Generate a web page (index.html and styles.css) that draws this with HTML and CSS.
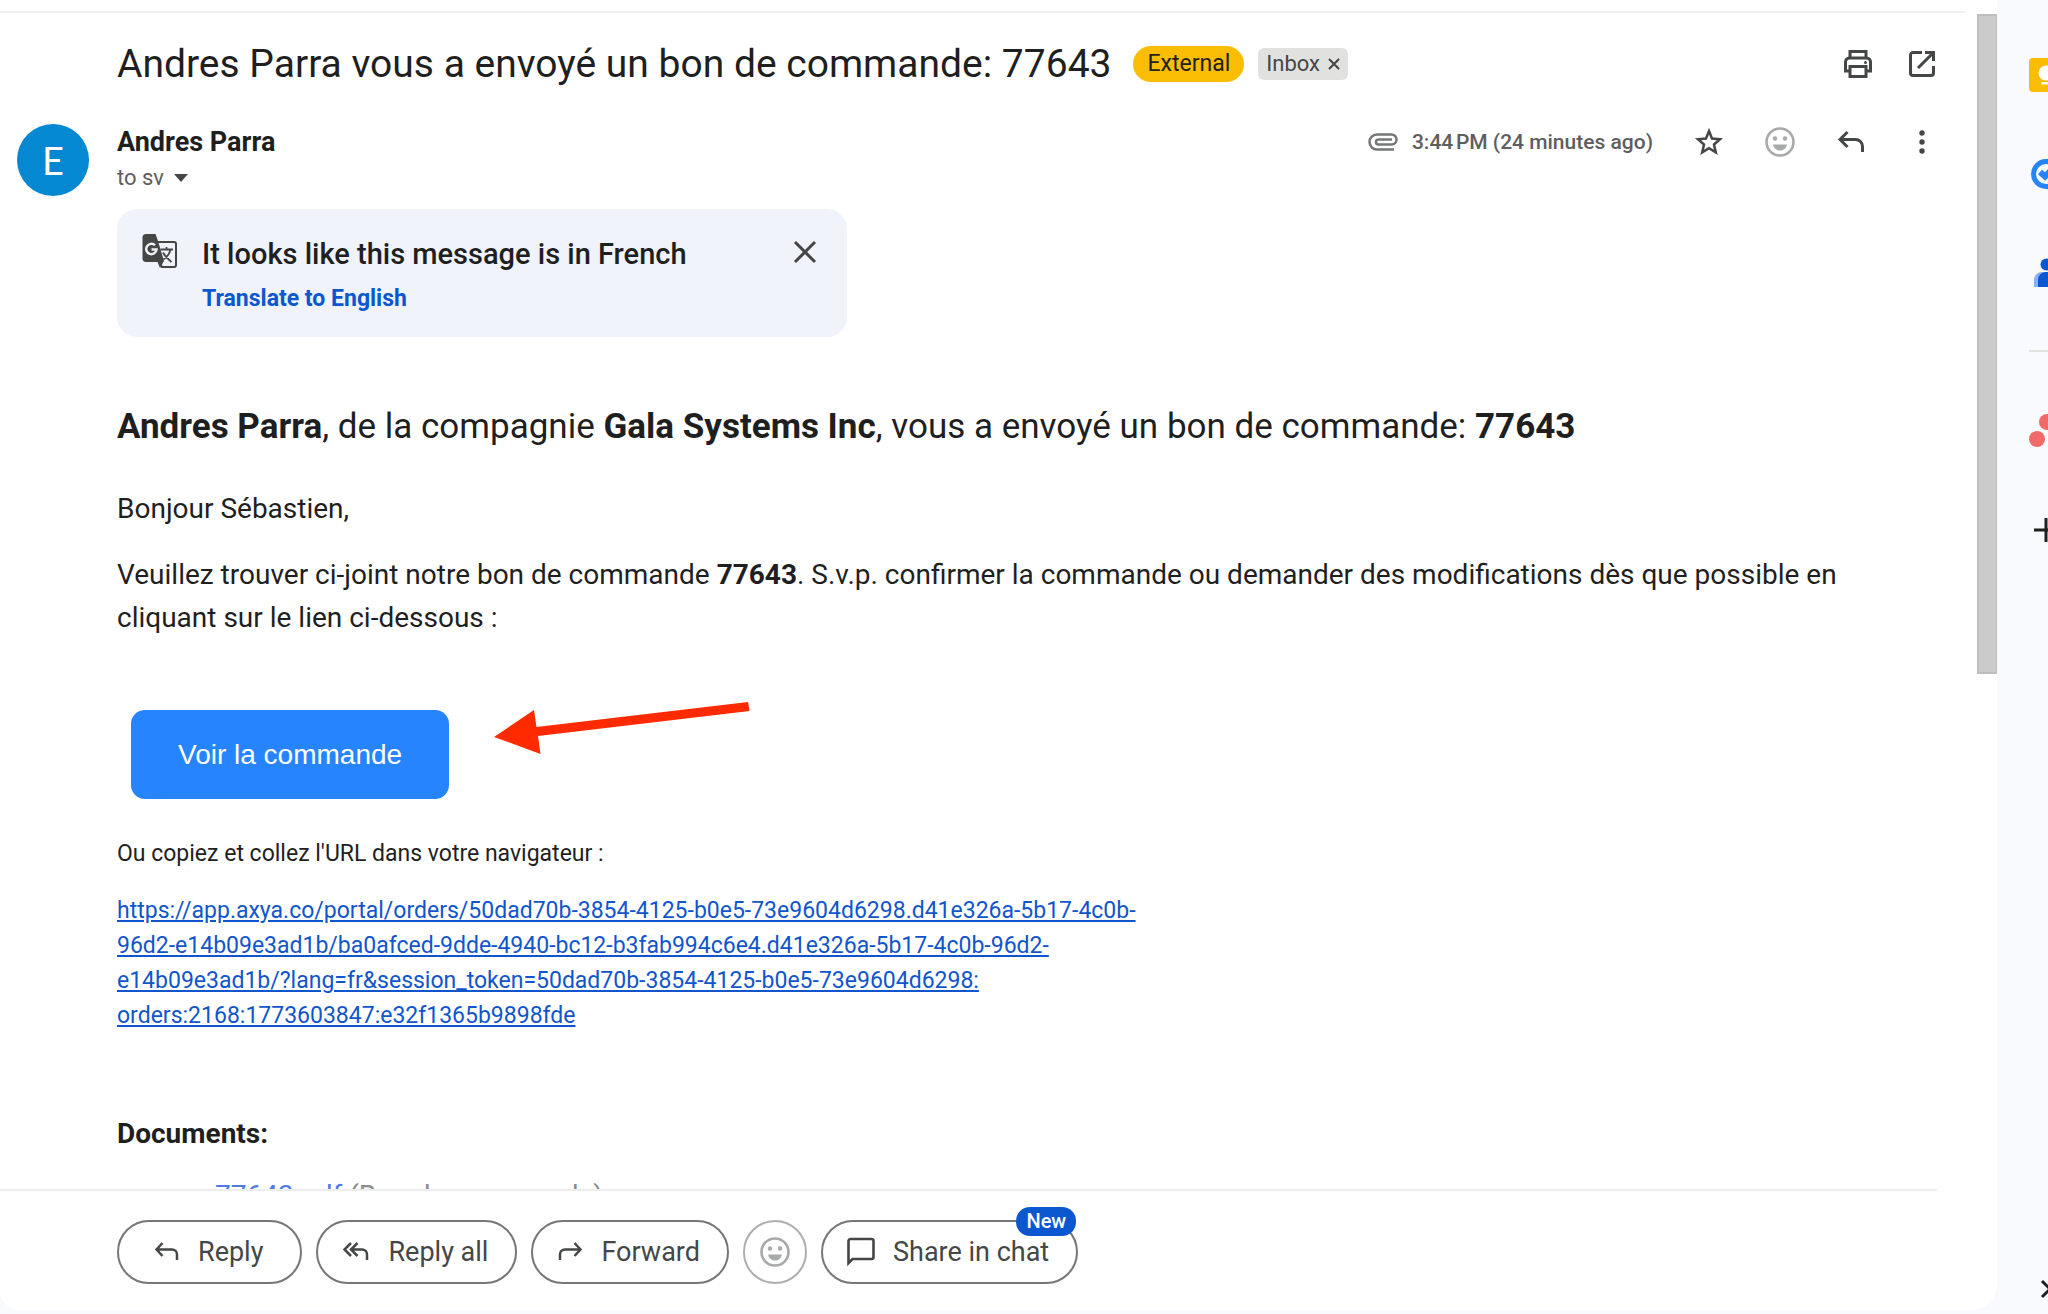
FILE: index.html
```
<!DOCTYPE html>
<html lang="fr">
<head>
<meta charset="utf-8">
<title>Andres Parra vous a envoyé un bon de commande: 77643</title>
<link rel="stylesheet" href="styles.css">
</head>
<body>
<div class="app">
  <main class="mail">
    <div class="scroller">
      <article class="thread">
        <header class="subject">
          <h1 class="subject-title">Andres Parra vous a envoyé un bon de commande: 77643</h1>
          <span class="tag-external">External</span>
          <span class="tag-inbox">Inbox
            <button class="icon-button" aria-label="Remove label Inbox"><svg width="12" height="12" viewBox="0 0 12 12"><path d="M1 1 11 11M11 1 1 11" fill="none" stroke="#444746" stroke-width="2"/></svg></button>
          </span>
          <div class="subject-actions">
            <button class="icon-button" aria-label="Print"><svg width="30" height="32" viewBox="0 0 30 32"><g fill="none" stroke="#444746" stroke-width="3"><path d="M7 10V3.500H23V10"/><path d="M7 23H2.500V14a4 4 0 0 1 4-4h17a4 4 0 0 1 4 4v9H23"/><path d="M7 18.500H23V28.500H7z"/></g><circle cx="22.500" cy="14.500" r="1.500" fill="#444746"/></svg></button>
            <button class="icon-button" aria-label="Open in new window"><svg width="28" height="32" viewBox="0 0 28 32"><g fill="none" stroke="#444746" stroke-width="3"><path d="M14 4.500H5a2.500 2.500 0 0 0-2.500 2.500V25A2.500 2.500 0 0 0 5 27.500H23A2.500 2.500 0 0 0 25.500 25V18"/><path d="M17 4.500H25.500V13M25 5 10 20"/></g></svg></button>
          </div>
        </header>

        <section class="sender">
          <div class="avatar">E</div>
          <div class="sender-text">
            <h2 class="sender-name">Andres Parra</h2>
            <button class="recipient">to sv <svg width="14" height="8" viewBox="0 0 14 8"><path d="M0 0H14L7 8z" fill="#444746"/></svg></button>
          </div>
          <div class="sender-actions">
            <svg class="clip" width="30" height="18" viewBox="0 0 30 18"><path d="M26 16.500H9a7.500 7.500 0 0 1 0-15H23.500a5 5 0 0 1 0 10H10.500a2.500 2.500 0 0 1 0-5H24" fill="none" stroke="#747775" stroke-width="2.500"/></svg>
            <time class="sent">3:44&#8239;PM (24 minutes ago)</time>
            <button class="icon-button" aria-label="Star"><svg width="30" height="30" viewBox="0 0 30 30"><path d="M15 4 18 11.500 26 12.200 20 17.500 21.800 25.400 15 21.200 8.200 25.400 10 17.500 4 12.200 12 11.500z" fill="none" stroke="#444746" stroke-width="2.500"/></svg></button>
            <button class="icon-button" aria-label="Add reaction"><svg width="30" height="30" viewBox="0 0 30 30"><use href="#smile"/></svg></button>
            <button class="icon-button" aria-label="Reply"><svg width="28" height="24" viewBox="0 0 28 24"><path d="M10.500 2 3 9.500 10.500 17M3.500 9.500H18.500a7 7 0 0 1 7 7V22" fill="none" stroke="#444746" stroke-width="3"/></svg></button>
            <button class="icon-button" aria-label="More"><svg width="6" height="24" viewBox="0 0 6 24"><g fill="#444746"><circle cx="3" cy="3" r="2.700"/><circle cx="3" cy="12" r="2.700"/><circle cx="3" cy="21" r="2.700"/></g></svg></button>
          </div>
        </section>

        <aside class="translate">
          <svg width="36" height="36" viewBox="0 0 36 36"><path d="M16 8H32a2 2 0 0 1 2 2V31a2 2 0 0 1-2 2H20L16 25" fill="none" stroke="#444746" stroke-width="2"/><path d="M4 0H13.500L16 7 22 27 18 34 15.500 28H4A3.500 3.500 0 0 1 .500 24.500V3.500A3.500 3.500 0 0 1 4 0z" fill="#444746"/><path d="M13 11.200A5.200 5.200 0 1 0 14.600 15.500H9.500" fill="none" stroke="#f0f3fa" stroke-width="2.400"/><path d="M18.500 15.500H31M24.500 13V15.500M28.500 15.500C27.500 20 24.500 23.500 21.500 25.500M21 18.500C23 22.500 26 25 29.500 28" fill="none" stroke="#444746" stroke-width="1.800"/></svg>
          <div class="translate-text">
            <p class="translate-title">It looks like this message is in French</p>
            <a class="translate-link" href="#">Translate to English</a>
          </div>
          <button class="icon-button" aria-label="Close"><svg width="24" height="24" viewBox="0 0 24 24"><path d="M2 2 22 22M22 2 2 22" fill="none" stroke="#444746" stroke-width="3"/></svg></button>
        </aside>

        <section class="message">
          <h3 class="headline"><b>Andres Parra</b>, de la compagnie <b>Gala Systems Inc</b>, vous a envoyé un bon de commande: <b>77643</b></h3>
          <p class="paragraph">Bonjour Sébastien,</p>
          <p class="paragraph">Veuillez trouver ci-joint notre bon de commande <b>77643</b>. S.v.p. confirmer la commande ou demander des modifications dès que possible en cliquant sur le lien ci-dessous :</p>
          <div class="order">
            <a class="order-button" href="#">Voir la commande</a>
            <svg class="pointer" width="256" height="56" viewBox="0 0 256 56"><path d="M0 35 40 8 42.500 25 254 0 255.500 9 44 34 46.500 52z" fill="#ff2a00"/></svg>
          </div>
          <p class="note">Ou copiez et collez l'URL dans votre navigateur :</p>
          <p class="note"><a class="url" href="#">https://app.axya.co/portal/orders/50dad70b-3854-4125-b0e5-73e9604d6298.d41e326a-5b17-4c0b-<br>96d2-e14b09e3ad1b/ba0afced-9dde-4940-bc12-b3fab994c6e4.d41e326a-5b17-4c0b-96d2-<br>e14b09e3ad1b/?lang=fr&amp;session_token=50dad70b-3854-4125-b0e5-73e9604d6298:<br>orders:2168:1773603847:e32f1365b9898fde</a></p>
          <h4 class="documents">Documents:</h4>
          <ul class="files"><li><a href="#">77643.pdf</a> (Bon de commande)</li></ul>
        </section>
      </article>
      <div class="scrollbar"></div>
    </div>

    <footer class="reply-bar">
      <button class="pill pill-reply"><svg width="26" height="24" viewBox="0 0 26 24"><path d="M8.500 3 2.500 9.500 8.500 16M3 9.500H18a5 5 0 0 1 5 5V20" fill="none" stroke="#444746" stroke-width="2.500"/></svg>Reply</button>
      <button class="pill"><svg width="28" height="24" viewBox="0 0 28 24"><path d="M9 3 2.500 9.500 9 16M15.500 3 9 9.500 15.500 16M9.500 9.500H20a5 5 0 0 1 5 5V20" fill="none" stroke="#444746" stroke-width="2.500"/></svg>Reply all</button>
      <button class="pill"><svg width="26" height="24" viewBox="0 0 26 24"><path d="M17.500 3 23.500 9.500 17.500 16M23 9.500H8a5 5 0 0 0-5 5V20" fill="none" stroke="#444746" stroke-width="2.500"/></svg>Forward</button>
      <button class="pill pill-round" aria-label="Add reaction"><svg width="30" height="30" viewBox="0 0 30 30"><g id="smile"><circle cx="15" cy="15" r="13.500" fill="none" stroke="#a8a9a9" stroke-width="2.600"/><circle cx="10" cy="11.500" r="2.200" fill="#a8a9a9"/><circle cx="20" cy="11.500" r="2.200" fill="#a8a9a9"/><path d="M8 17.500H22C21 21.500 18.500 23.500 15 23.500S9 21.500 8 17.500z" fill="#a8a9a9"/></g></svg></button>
      <button class="pill"><svg width="28" height="30" viewBox="0 0 28 30"><path d="M1.500 26V4A2 2 0 0 1 3.500 2H24.500A2 2 0 0 1 26.500 4V20A2 2 0 0 1 24.500 22H5.500z" fill="none" stroke="#444746" stroke-width="2.600"/></svg>Share in chat<span class="badge">New</span></button>
    </footer>
  </main>

  <nav class="side" aria-label="Side panel">
    <a href="#" aria-label="Keep"><svg width="34" height="34" viewBox="0 0 34 34"><rect width="34" height="34" rx="4" fill="#fbbc04"/><circle cx="17" cy="15" r="7.500" fill="#fff"/><path d="M12.500 24H21.500V26.500H12.500z" fill="#fff"/></svg></a>
    <a href="#" aria-label="Tasks"><svg width="34" height="34" viewBox="0 0 34 34"><circle cx="17" cy="17" r="12.500" fill="none" stroke="#2684fc" stroke-width="5"/><path d="M11 15 16 19.500 27 8" fill="none" stroke="#2684fc" stroke-width="6"/></svg></a>
    <a href="#" aria-label="Contacts"><svg width="34" height="34" viewBox="0 0 34 34"><path d="M5 31V24A8 8 0 0 1 13 16H20V31z" fill="#8ab0fa"/><path d="M9 31V24A8 8 0 0 1 17 16H26V31z" fill="#0b57d0"/><circle cx="17.500" cy="8.500" r="6" fill="#0b57d0"/></svg></a>
    <hr class="side-rule">
    <a href="#" aria-label="Asana"><svg width="34" height="34" viewBox="0 0 34 34"><g fill="#f06a6a"><circle cx="8" cy="25" r="8"/><circle cx="18" cy="8" r="8"/></g></svg></a>
    <a href="#" aria-label="Get add-ons"><svg width="34" height="34" viewBox="0 0 34 34"><path d="M5 17H29M17 5V29" stroke="#1f1f1f" stroke-width="3"/></svg></a>
    <a class="side-toggle" href="#" aria-label="Hide side panel"><svg width="34" height="34" viewBox="0 0 34 34"><path d="M13 9 21 17 13 25" fill="none" stroke="#1f1f1f" stroke-width="3"/></svg></a>
  </nav>
</div>
</body>
</html>
```
FILE: styles.css
```
* { box-sizing: border-box; }

body {
  margin: 0;
  background: #f8fafd;
  color: #1f1f1f;
  font-family: Roboto, "Liberation Sans", sans-serif;
}

h1, h2, h3, h4, p, ul { margin: 0; padding: 0; }

button { font: inherit; color: inherit; cursor: pointer; }
svg { display: block; flex: none; }

.icon-button {
  display: flex;
  justify-content: center;
  padding: 0;
  border: 0;
  background: none;
}

.app {
  display: flex;
  height: 100vh;
  overflow: hidden;
}

.mail {
  flex: 1;
  min-width: 0;
  display: flex;
  flex-direction: column;
  margin-bottom: 4px;
  background: #fff;
  border-radius: 0 0 26px 20px;
}

.scroller {
  flex: 1;
  min-height: 0;
  display: flex;
  padding-top: 11px;
}

.thread {
  flex: 1;
  min-width: 0;
  overflow: hidden;
  border-top: 2px solid #f0f0f0;
  margin-right: 12px;
  padding-left: 117px;
}

.scrollbar {
  width: 20px;
  height: 56%;
  margin-top: 3px;
  background: #cbcbcb;
  border: 2px solid #bebebe;
  border-right-width: 1px;
}

/* Subject line */
.subject {
  display: flex;
  align-items: center;
  height: 102px;
  padding-right: 29px;
}

.subject-title {
  font-size: 39px;
  font-weight: 400;
  line-height: 48px;
  margin-right: 22px;
}

.tag-external {
  padding: 0 14px;
  border-radius: 18px;
  background: #fbbc04;
  font-size: 23px;
  line-height: 36px;
  margin-right: 14px;
}

.tag-inbox {
  display: flex;
  align-items: center;
  gap: 8px;
  padding: 0 8px;
  border-radius: 6px;
  background: #e1e1df;
  color: #444746;
  font-size: 22px;
  line-height: 32px;
}

.subject-actions {
  display: flex;
  gap: 35px;
  margin-left: auto;
}

/* Sender row */
.sender {
  display: flex;
  align-items: flex-start;
  margin-left: -100px;
  padding: 9px 28px 0 0;
  height: 94px;
}

.avatar {
  width: 72px;
  height: 72px;
  margin-right: 28px;
  border-radius: 50%;
  background: #0488d1;
  color: #fff;
  font: 38px/72px Lato, sans-serif;
  text-align: center;
}

.sender-name { font-size: 27px; font-weight: 700; line-height: 36px; }

.recipient {
  display: flex;
  align-items: center;
  gap: 10px;
  padding: 0;
  border: 0;
  background: none;
  color: #5e5e5e;
  font-size: 22px;
  line-height: 36px;
}

.sender-actions {
  display: flex;
  align-items: center;
  gap: 40px;
  height: 36px;
  margin-left: auto;
}

.sender-actions .icon-button { width: 31px; }

.clip { margin-right: -26px; }

.sent { color: #5e5e5e; font-size: 21px; font-weight: 500; }

/* Translation prompt */
.translate {
  display: flex;
  align-items: flex-start;
  width: 730px;
  height: 128px;
  padding: 25px 30px 0 25px;
  border-radius: 20px;
  background: #f0f3fa;
}

.translate-text { flex: 1; margin-left: 24px; }
.translate-title { font-size: 29px; font-weight: 500; line-height: 40px; }

.translate-link {
  display: block;
  margin-top: 7px;
  color: #0b57d0;
  font-size: 23px;
  font-weight: 700;
  line-height: 36px;
  text-decoration: none;
}

.translate .icon-button { margin-top: 6px; }

/* Message body */
.message { padding-right: 90px; }

.headline {
  margin-top: 66px;
  font-size: 35px;
  font-weight: 400;
  line-height: 48px;
}

.paragraph { font-size: 28px; line-height: 43px; }
.headline + .paragraph { margin-top: 36px; }
.paragraph + .paragraph { margin-top: 23px; }

.order {
  display: flex;
  align-items: flex-start;
  gap: 45px;
  margin: 71px 14px 0;
}

.order-button {
  padding: 0 47px;
  border-radius: 14px;
  background: #2684ff;
  color: #fff;
  font: 28px/89px "Liberation Sans", sans-serif;
  text-decoration: none;
}

.pointer { margin-top: -8px; }

.note { font-size: 23px; line-height: 35px; }
.order + .note { margin-top: 37px; }
.note + .note { margin-top: 22px; }
.url { color: #1155cc; }

.documents { margin-top: 79px; font-size: 28px; line-height: 43px; }

.files {
  margin: 19px 0 0 98px;
  list-style: none;
  color: #8a8d8c;
  font-size: 28px;
  line-height: 43px;
}

.files a { color: #4f7be0; text-decoration: none; }

/* Reply actions */
.reply-bar {
  display: flex;
  gap: 14px;
  margin-right: 60px;
  padding: 29px 0 26px 117px;
  border-top: 2px solid #eceeee;
}

.pill {
  position: relative;
  display: flex;
  align-items: center;
  justify-content: center;
  gap: 18px;
  height: 64px;
  padding: 0 27px 0 24px;
  border: 2px solid #747775;
  border-radius: 32px;
  background: #fff;
  color: #444746;
  font-size: 27px;
}

.pill-reply { padding: 0 37px 0 35px; }

.pill-round {
  width: 64px;
  padding: 0;
  border-color: #adaeae;
}

.badge {
  position: absolute;
  top: -15px;
  right: 0;
  padding: 0 10px;
  border-radius: 14px;
  background: #0b57d0;
  color: #fff;
  font-size: 20px;
  font-weight: 500;
  line-height: 29px;
}

/* Side panel, cut by the window's edge */
.side {
  width: 51px;
  display: flex;
  flex-direction: column;
  gap: 65px;
  padding: 58px 0 8px 32px;
  overflow: hidden;
}

.side-rule {
  width: 40px;
  height: 2px;
  margin: -5px 0 -3px;
  border: 0;
  background: #e1e3e1;
}

.side-toggle { margin-top: auto; }
```
